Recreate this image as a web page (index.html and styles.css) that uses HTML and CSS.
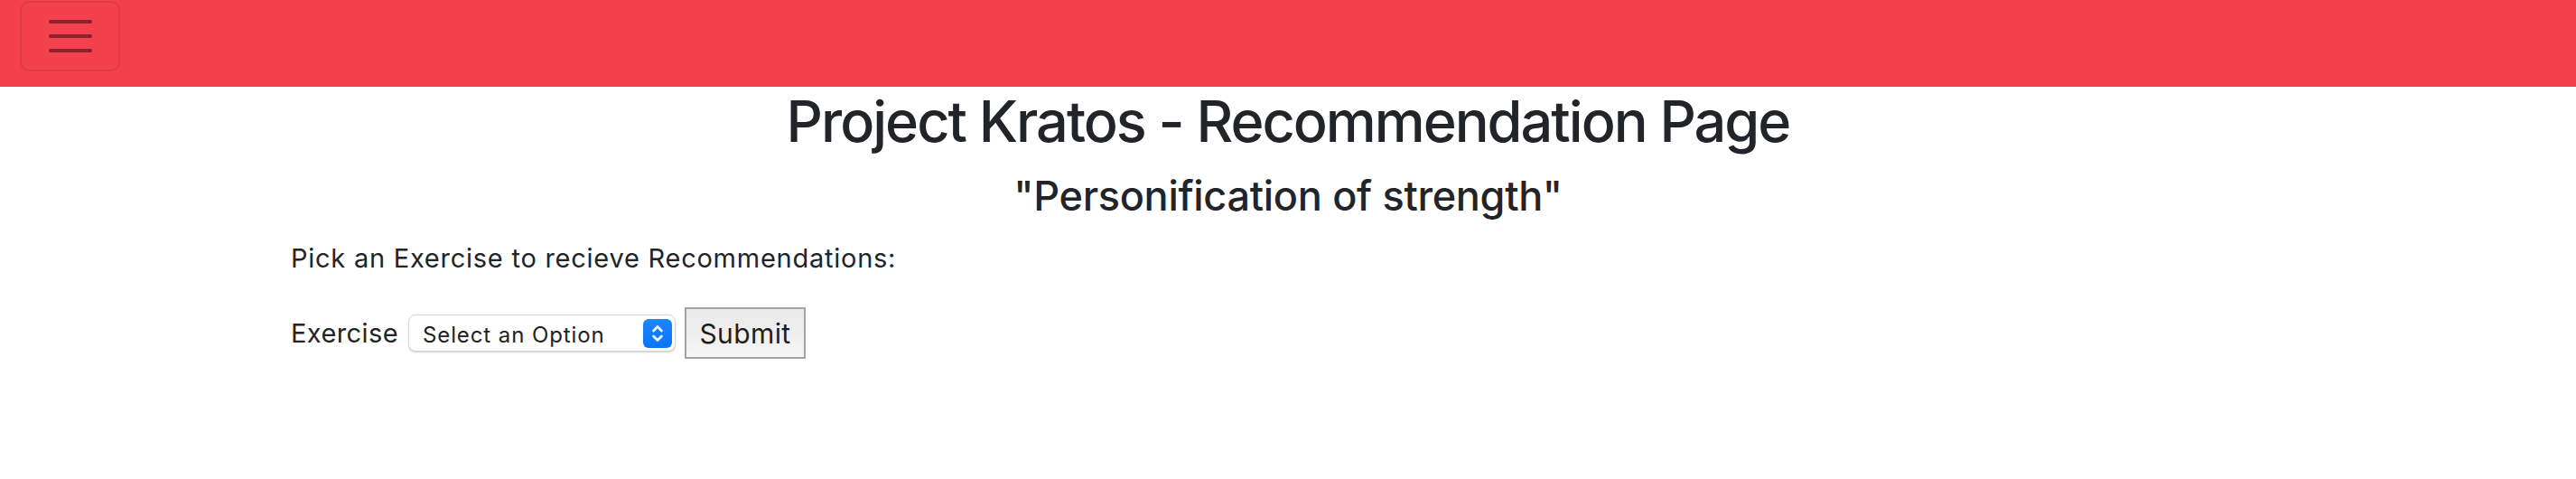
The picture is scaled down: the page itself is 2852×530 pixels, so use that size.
FILE: index.html
```html
<!DOCTYPE html>
<html lang="en">
<head>
<meta charset="utf-8">
<title>Project Kratos - Recommendation Page</title>
<link rel="stylesheet" href="styles.css">
</head>
<body>
<nav class="navbar">
  <button class="toggler" type="button" aria-label="Toggle navigation">
    <svg class="toggler-icon" width="48" height="36" viewBox="0 0 48 36">
      <path d="M2 2H46M2 18H46M2 34H46" stroke="#8a2129" stroke-width="4" stroke-linecap="round" fill="none"/>
    </svg>
  </button>
</nav>
<main class="page">
  <h1 class="title">Project Kratos - Recommendation Page</h1>
  <h2 class="subtitle">"Personification of strength"</h2>
  <div class="container">
    <p class="lead-text">Pick an Exercise to recieve Recommendations:</p>
    <form class="form-row">
      <label class="field-label" for="exercise">Exercise</label>
      <div class="select-wrap">
        <select id="exercise" class="select">
          <option>Select an Option</option>
        </select>
        <span class="stepper">
          <svg width="32" height="32" viewBox="0 0 32 32">
            <path d="M11.5 13L16 8.5L20.5 13M11.5 19L16 23.5L20.5 19" stroke="#fff" stroke-width="2.6" stroke-linecap="round" stroke-linejoin="round" fill="none"/>
          </svg>
        </span>
      </div>
      <button class="submit" type="submit">Submit</button>
    </form>
  </div>
</main>
</body>
</html>
```

FILE: styles.css
```css
* {
  box-sizing: border-box;
}

body {
  margin: 0;
  font-family: Inter, "Noto Sans", sans-serif;
  color: #212529;
  background: #ffffff;
}

.navbar {
  display: flex;
  align-items: flex-start;
  height: 96px;
  padding: 1px 0 0 22px;
  background: #f2414c;
}

.toggler {
  display: flex;
  align-items: center;
  justify-content: center;
  width: 111px;
  height: 78px;
  padding: 0;
  background: transparent;
  border: 2px solid rgba(0, 0, 0, 0.08);
  border-radius: 10px;
}

.toggler-icon {
  display: block;
}

.page {
  padding-top: 1px;
}

.title {
  margin: 0;
  font-size: 63px;
  font-weight: 500;
  letter-spacing: -2px;
  line-height: 1.2;
  text-align: center;
}

.subtitle {
  margin: 17px 0 0;
  font-size: 45px;
  font-weight: 500;
  letter-spacing: -0.3px;
  line-height: 1.2;
  text-align: center;
}

.container {
  width: 2208px;
  margin: 0 auto;
}

.lead-text {
  margin: 20px 0 0;
  font-size: 29px;
  letter-spacing: 0.75px;
  line-height: 1.5;
}

.form-row {
  display: flex;
  align-items: center;
  margin-top: 33px;
  height: 57px;
}

.field-label {
  font-size: 29px;
  letter-spacing: 0.4px;
  line-height: 1.5;
  margin-right: 11px;
}

.select-wrap {
  position: relative;
  width: 296px;
  height: 41px;
  margin-right: 10px;
}

.select {
  appearance: none;
  -webkit-appearance: none;
  width: 100%;
  height: 100%;
  padding: 3px 40px 0 15px;
  font-family: Inter, "Noto Sans", sans-serif;
  font-size: 24px;
  letter-spacing: 0.9px;
  color: #222222;
  background: #ffffff;
  border: 1px solid #d6d6d6;
  border-radius: 8px;
  box-shadow: 0 1px 1.5px rgba(0, 0, 0, 0.18);
}

.stepper {
  position: absolute;
  top: 5px;
  right: 4px;
  width: 32px;
  height: 32px;
  border-radius: 6px;
  background: linear-gradient(#1b86ff, #0a74f5);
  pointer-events: none;
}

.stepper svg {
  display: block;
}

.submit {
  width: 134px;
  height: 57px;
  padding: 0;
  font-family: Inter, "Noto Sans", sans-serif;
  font-size: 30px;
  letter-spacing: 0.4px;
  color: #1e1e1e;
  background: linear-gradient(#e9e9e9, #f5f5f5);
  border: 2px solid #a3a3a3;
  border-radius: 0;
}
```
